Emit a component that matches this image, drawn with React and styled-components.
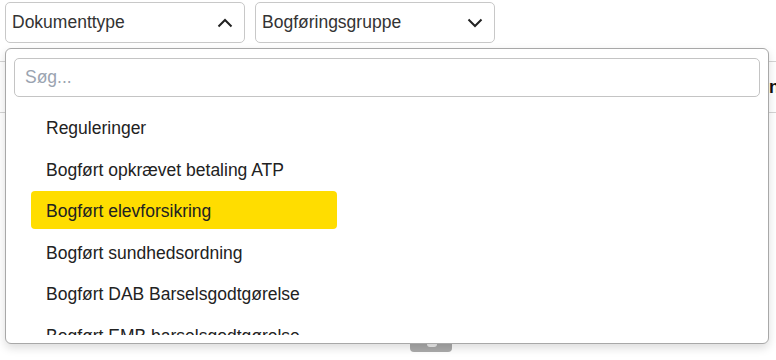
import React from "react";
import styled, { createGlobalStyle } from "styled-components";

const GlobalStyle = createGlobalStyle`
  html, body {
    margin: 0;
    padding: 0;
    background: #ffffff;
    font-family: "Liberation Sans", Arial, sans-serif;
    color: #222;
    overflow: hidden;
  }
`;

const items = [
  "Reguleringer",
  "Bogført opkrævet betaling ATP",
  "Bogført elevforsikring",
  "Bogført sundhedsordning",
  "Bogført DAB Barselsgodtgørelse",
  "Bogført EMB barselsgodtgørelse",
  "Bogført AER",
];

function Chevron({ up }) {
  return (
    <svg width="16" height="10" viewBox="0 0 16 10">
      <polyline
        points={up ? "1.5,8.5 8,2 14.5,8.5" : "1.5,1.5 8,8 14.5,1.5"}
        fill="none"
        stroke="#222"
        strokeWidth="2"
      />
    </svg>
  );
}

export default function App() {
  return (
    <>
      <GlobalStyle />
      <Page>
        <Toolbar>
          <Select>
            <span>Dokumenttype</span>
            <Chevron up />
          </Select>
          <Select>
            <span>Bogføringsgruppe</span>
            <Chevron />
          </Select>
        </Toolbar>

        <TableHead>
          <HeadCell $width={769} />
          <HeadCell>nr</HeadCell>
        </TableHead>

        <Footer>
          <PageButton>
            <Notch />
          </PageButton>
        </Footer>

        <Panel>
          <Search placeholder="Søg..." />
          <List>
            {items.map((label, i) => (
              <Item key={label} $active={i === 2}>
                {label}
              </Item>
            ))}
          </List>
        </Panel>
      </Page>
    </>
  );
}

const Page = styled.div`
  position: relative;
  width: 776px;
  height: 360px;
  overflow: hidden;
`;

const Toolbar = styled.div`
  display: flex;
  gap: 10px;
  padding: 2px 5px 0;
`;

const Select = styled.button`
  display: flex;
  align-items: center;
  justify-content: space-between;
  box-sizing: border-box;
  width: 240px;
  height: 41px;
  padding: 0 11px 0 6px;
  background: #fff;
  border: 1px solid #c8c8c8;
  border-radius: 5px;
  font-family: inherit;
  font-size: 17.5px;
  color: #333;
  cursor: pointer;
`;

const TableHead = styled.div`
  display: flex;
  align-items: center;
  margin-top: 18px;
  height: 50px;
  border-top: 1px solid #d4d4d4;
  border-bottom: 1px solid #d4d4d4;
  white-space: nowrap;
`;

const HeadCell = styled.div`
  flex: none;
  width: ${(p) => (p.$width ? `${p.$width}px` : "auto")};
  font-weight: bold;
  font-size: 17.5px;
  color: #111;
`;

const Footer = styled.div`
  display: flex;
  padding: 206px 0 0 410px;
`;

const PageButton = styled.div`
  position: relative;
  width: 42px;
  height: 33px;
  background: #ababab;
  border-radius: 4px;
`;

const Notch = styled.div`
  position: absolute;
  left: 17px;
  bottom: 5px;
  width: 10px;
  height: 4px;
  background: #eee;
  border-radius: 0 0 3px 3px;
`;

const Panel = styled.div`
  position: absolute;
  top: 48px;
  left: 5px;
  width: 764px;
  box-sizing: border-box;
  padding: 9px 8px 8px;
  background: #fff;
  border: 1px solid #a8a8a8;
  border-radius: 6px;
  box-shadow: 0 4px 10px rgba(0, 0, 0, 0.14);
`;

const Search = styled.input`
  display: block;
  box-sizing: border-box;
  width: 100%;
  height: 39px;
  padding: 0 10px;
  border: 1px solid #c4c4c4;
  border-radius: 5px;
  font-family: inherit;
  font-size: 17.5px;
  color: #222;
  outline: none;

  &::placeholder {
    color: #9aa3b0;
  }
`;

const List = styled.div`
  display: flex;
  flex-direction: column;
  gap: 3.5px;
  height: 227px;
  margin-top: 11px;
  padding-left: 17px;
  overflow: hidden;
`;

const Item = styled.div`
  display: flex;
  flex: none;
  align-items: center;
  width: 306px;
  height: 38px;
  padding: 3px 0 0 15px;
  box-sizing: border-box;
  border-radius: 4px;
  background: ${(p) => (p.$active ? "#ffdd00" : "transparent")};
  font-size: 17.5px;
  color: #222;
  white-space: nowrap;
`;
